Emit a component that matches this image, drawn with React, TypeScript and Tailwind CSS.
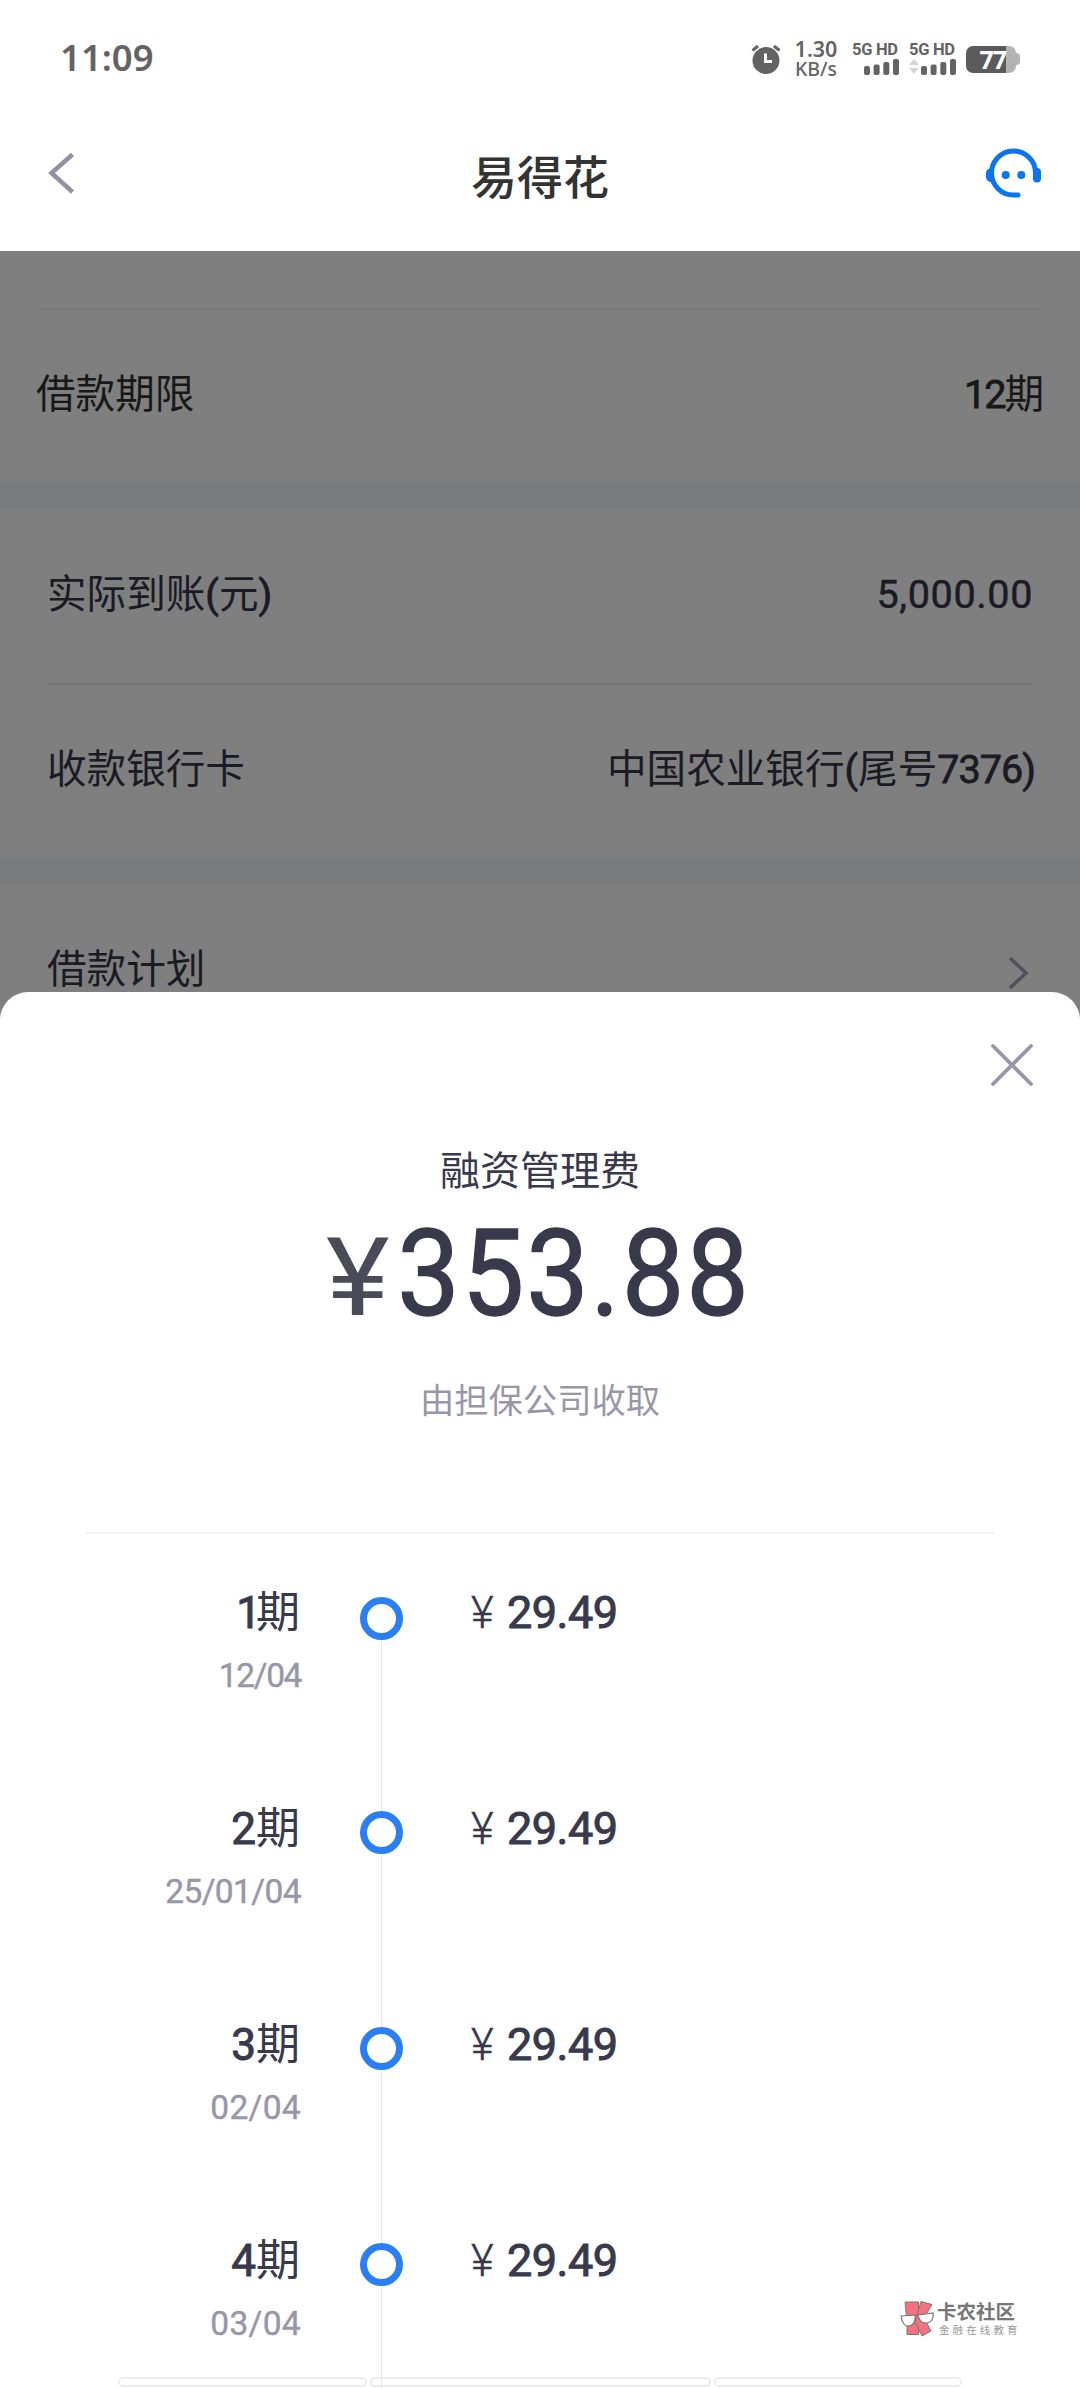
import React from 'react';

const installments = [
  { term: '1', date: '12/04', ring: 'h-[63px] shrink-0', termClass: 'tracking-[-5px]', dateClass: 'tracking-[-1.4px]' },
  { term: '2', date: '25/01/04', ring: 'h-[61px] w-px shrink-0 bg-[#e6e6ea]', termClass: 'tracking-normal', dateClass: 'tracking-[-0.6px]' },
  { term: '3', date: '02/04', ring: 'h-[61px] w-px shrink-0 bg-[#e6e6ea]', termClass: 'tracking-normal', dateClass: 'tracking-[0.3px]' },
  { term: '4', date: '03/04', ring: 'h-[61px] w-px shrink-0 bg-[#e6e6ea]', termClass: 'tracking-normal', dateClass: 'tracking-[0.3px]' },
];

function Signal({ arrows = false }: { arrows?: boolean }) {
  return (
    <div className="flex h-[36px] w-[48px] flex-col items-end">
      <span className="block h-[17px] w-[48px] text-[16.5px] leading-[18px] font-bold tracking-[-0.3px] whitespace-nowrap">5G HD</span>
      <svg width="48" height="18" viewBox="0 0 48 18">
        {arrows && (
          <g fill="#d5d5d5">
            <path d="M5 1L10 7H0z" />
            <path d="M5 16L10 10H0z" />
          </g>
        )}
        <g fill="#636363">
          <rect x="12" y="8" width="6" height="9" rx="2" />
          <rect x="21.6" y="6.5" width="6" height="10.5" rx="2" />
          <rect x="31.3" y="4" width="6" height="13" rx="2" />
          <rect x="41" y="1" width="6" height="16" rx="2" />
        </g>
      </svg>
    </div>
  );
}

function StatusBar() {
  return (
    <div className="flex h-[118px] shrink-0 items-center pr-[60px] pl-[60px] font-['Noto_Sans',sans-serif] text-[#636363]">
      <span className="mb-[3px] text-[36.5px] leading-none font-semibold">11:09</span>
      <div className="ml-auto flex items-center">
        <svg width="30" height="30" viewBox="0 0 30 30">
          <circle cx="15" cy="16.5" r="13.5" fill="#636363" />
          <path d="M1.5 6.5L7 2M28.5 6.5L23 2" stroke="#636363" strokeWidth="3" />
          <path d="M14.5 9.5V17.5H21" fill="none" stroke="#fff" strokeWidth="3" />
        </svg>
        <div className="mr-[1px] mb-[1px] ml-[12px] w-[46px] text-center">
          <div className="text-[21.5px] leading-[20px] font-semibold">1.30</div>
          <div className="text-[19.5px] leading-[19px] font-medium">KB/s</div>
        </div>
        <div className="ml-[12px] flex gap-[9px] font-['Roboto',sans-serif]">
          <Signal />
          <Signal arrows />
        </div>
        <div className="ml-[9px] flex items-center">
          <div className="flex h-[27px] w-[50px] items-center justify-end rounded-[7px] bg-linear-to-r from-[#5b5b5b] from-80% to-[#b3b3b3] to-80% pr-[10px] text-[25px] leading-none font-bold tracking-[-1px] text-white">77</div>
          <div className="h-[12px] w-[4px] rounded-r-[4px] bg-[#b3b3b3]" />
        </div>
      </div>
    </div>
  );
}

function TitleBar() {
  return (
    <div className="flex flex-1 items-start justify-between pr-[37px] pl-[47px]">
      <svg className="mt-[34px]" width="54" height="42" viewBox="0 0 54 42">
        <path d="M25.5 2.500L4.500 21L25.500 40" fill="none" stroke="#9290a3" strokeWidth="4.500" />
      </svg>
      <h1 className="mt-[35px] mr-[6px] text-[46px] leading-[50px] font-medium text-[#333]">易得花</h1>
      <svg className="mt-[29px]" width="58" height="52" viewBox="0 0 58 52">
        <path d="M50.500 25A22 22 0 1 0 28.500 48H33" fill="none" stroke="#0b74f1" strokeWidth="5" strokeLinecap="round" />
        <path d="M8.500 21C3.500 21 1 23 1 26V30C1 33 3.500 35.500 8.500 35.500z" fill="#0b74f1" />
        <rect x="48" y="21" width="8" height="14.500" rx="4" fill="#0b74f1" />
        <circle cx="20.700" cy="28" r="4" fill="#0b74f1" />
        <circle cx="36.300" cy="28" r="4" fill="#0b74f1" />
      </svg>
    </div>
  );
}

function LoanDetails() {
  return (
    <section className="h-[741px] overflow-hidden text-[39.600px] leading-none text-[#1b1b25]">
      <div className="mx-[37px] mt-[57px] border-t-2 border-[#7a7a7a]" />
      <div className="flex h-[171px] items-center justify-between px-[36px] pb-[2px] text-[#181818]">
        <span>借款期限</span>
        <span><span className="tracking-[-2px] [-webkit-text-stroke:0.8px]">12</span>期</span>
      </div>
      <div className="h-[27px] bg-[#7a7b7d]" />
      <div className="flex h-[175px] items-center justify-between px-[47px] pb-[2px]">
        <span>实际到账<span className="[-webkit-text-stroke:0.8px]">(</span>元<span className="[-webkit-text-stroke:0.8px]">)</span></span>
        <span className="tracking-[0.600px] [-webkit-text-stroke:0.5px]">5,000.00</span>
      </div>
      <div className="mx-[48px] border-t-2 border-[#787878]" />
      <div className="flex h-[172px] items-center justify-between pr-[45px] pb-[2px] pl-[47px]">
        <span>收款银行卡</span>
        <span>中国农业银行<span className="[-webkit-text-stroke:0.8px]">(</span>尾号<span className="tracking-[-1px] [-webkit-text-stroke:0.8px]">7376)</span></span>
      </div>
      <div className="h-[28px] bg-[#7a7b7d]" />
      <div className="flex h-[168px] items-center justify-between pt-[2px] pr-[48px] pl-[47px]">
        <span>借款计划</span>
        <svg className="mt-[5px]" width="26" height="36" viewBox="0 0 26 36">
          <path d="M4 3L20 18L4 33" fill="none" stroke="#52525d" strokeWidth="3.500" />
        </svg>
      </div>
    </section>
  );
}

function Watermark() {
  return (
    <div className="absolute top-[2298px] left-[898px] flex font-['Noto_Sans_CJK_SC',sans-serif] text-[#777]">
      <svg width="38" height="40" viewBox="0 0 38 40">
        <g fill="#f4717f" stroke="#777" strokeWidth="1">
          <path d="M7 4H20.500V36.500H9V24z" />
          <path d="M23 3.500L34 6.500L26 20L33 33L24 38L17 24z" />
        </g>
        <g fill="#fff" stroke="#777" strokeWidth="1.200">
          <path d="M3 18L17 17C18 23 15 28 10 28C6 28 4 24 3 18z" />
          <path d="M20 17L35 15C36 21 33 25 28 25C24 25 21 22 20 17z" />
        </g>
      </svg>
      <div className="ml-[1px] pt-[2px]">
        <div className="text-[19.500px] leading-[22px] font-bold">卡农社区</div>
        <div className="ml-[2px] text-[10.500px] leading-[15px] tracking-[3.100px] whitespace-nowrap text-[#999]">金融在线教育</div>
      </div>
    </div>
  );
}

function FeeSheet() {
  return (
    <section className="flex h-[1396px] flex-col overflow-hidden rounded-t-[28px] bg-white text-[#383a4b]">
      <div className="flex h-[152px] shrink-0 justify-end pt-[51px] pr-[46px]">
        <svg width="44" height="44" viewBox="0 0 44 44">
          <path d="M3 3L41 41M41 3L3 41" stroke="#9896ab" strokeWidth="3.800" strokeLinecap="round" />
        </svg>
      </div>
      <div className="flex h-[56px] shrink-0 items-center justify-center text-[40px] leading-none">融资管理费</div>
      <div className="flex h-[149px] shrink-0 items-baseline justify-center leading-[148px]">
        <span className="inline-block scale-x-110 text-[110px] text-[#4a4a58]">¥</span>
        <span className="-mr-[15px] -ml-[4px] inline-block scale-x-[0.92] text-[121px] tracking-[2px] [-webkit-text-stroke:1.4px]">353.88</span>
      </div>
      <div className="flex h-[104px] shrink-0 items-center justify-center text-[34.300px] leading-none text-[#9896a8]">由担保公司收取</div>
      <div className="mx-[86px] mt-[79px] border-t-2 border-[#f1f1f3]" />
      <div className="flex h-[854px] flex-col overflow-hidden">
        {installments.map((it) => (
          <div key={it.term} className="flex h-[216px] shrink-0">
            <div className="mt-[51px] w-[301px] text-right">
              <div className="pr-[1px] text-[44px] leading-[56px]">
                <span className={`[-webkit-text-stroke:1px] ${it.termClass}`}>{it.term}</span>期
              </div>
              <div className={`text-[33.500px] leading-[69px] text-[#9896a8] [-webkit-text-stroke:0.4px] ${it.dateClass}`}>{it.date}</div>
            </div>
            <div className="ml-[59px] flex w-[43px] shrink-0 flex-col items-center">
              <div className={it.ring} />
              <div className="size-[43px] shrink-0 rounded-full border-[7px] border-[#2b7ff5] bg-white" />
              <div className="w-px flex-1 bg-[#e6e6ea]" />
            </div>
            <div className="mt-[51px] ml-[68px] flex items-baseline leading-[56px]">
              <span className="w-[36px] text-[44px] font-light [-webkit-text-stroke:0.4px]">¥</span>
              <span className="text-[45px] tracking-[-0.500px] [-webkit-text-stroke:1px]">29.49</span>
            </div>
          </div>
        ))}
      </div>
    </section>
  );
}

export default function App() {
  return (
    <main className="relative flex h-[2388px] w-[1080px] flex-col overflow-hidden bg-[#7f7f7f] font-['Roboto','Noto_Sans_CJK_SC',sans-serif]">
      <header className="flex h-[251px] shrink-0 flex-col bg-white">
        <StatusBar />
        <TitleBar />
      </header>
      <LoanDetails />
      <FeeSheet />
      <div className="absolute top-[2377px] left-[118px] flex gap-[3px]">
        <div className="h-[10px] w-[249px] rounded-[5px] border-2 border-[#ececec]" />
        <div className="h-[10px] w-[341px] rounded-[4px] border-2 border-[#ececec]" />
        <div className="h-[10px] w-[248px] rounded-[5px] border-2 border-[#ececec]" />
      </div>
      <Watermark />
    </main>
  );
}
